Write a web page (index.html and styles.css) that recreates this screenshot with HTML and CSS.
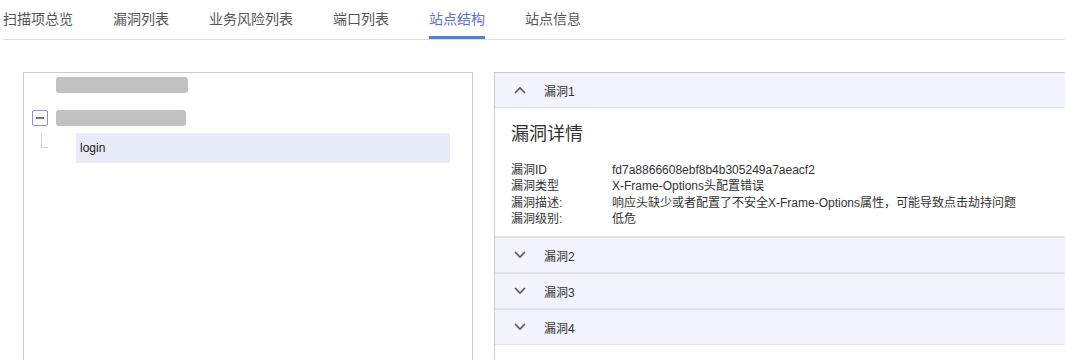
FILE: index.html
```html
<!DOCTYPE html>
<html lang="zh-CN">
  <head>
    <meta charset="UTF-8">
    <meta name="viewport" content="width=device-width, initial-scale=1.0">
    <title>站点结构</title>
    <link rel="stylesheet" href="styles.css">
  </head>
  <body>
    <ul class="tabs">
      <li>扫描项总览</li>
      <li>漏洞列表</li>
      <li>业务风险列表</li>
      <li>端口列表</li>
      <li class="active">站点结构</li>
      <li>站点信息</li>
    </ul>

    <div class="main">
      <div class="tree">
        <div class="tree-row first">
          <span class="masked" style="width: 132px"></span>
        </div>
        <div class="tree-row parent">
          <span class="toggle"></span>
          <span class="masked" style="width: 130px"></span>
        </div>
        <div class="tree-row child">
          <span class="guide"></span>
          <span class="node-label">login</span>
        </div>
      </div>

      <div class="vulns">
        <div class="item open">
          <div class="item-head">
            <svg width="12" height="8" viewBox="0 0 12 8"><polyline points="1,7 6,2 11,7" fill="none" stroke="#555" stroke-width="1.6"/></svg>
            <span>漏洞1</span>
          </div>
          <div class="item-body">
            <h3>漏洞详情</h3>
            <dl class="details">
              <dt>漏洞ID</dt><dd>fd7a8866608ebf8b4b305249a7aeacf2</dd>
              <dt>漏洞类型</dt><dd>X-Frame-Options头配置错误</dd>
              <dt>漏洞描述:</dt><dd>响应头缺少或者配置了不安全X-Frame-Options属性，可能导致点击劫持问题</dd>
              <dt>漏洞级别:</dt><dd>低危</dd>
            </dl>
          </div>
        </div>
        <div class="item">
          <div class="item-head">
            <svg width="12" height="8" viewBox="0 0 12 8"><polyline points="1,1 6,6 11,1" fill="none" stroke="#555" stroke-width="1.6"/></svg>
            <span>漏洞2</span>
          </div>
        </div>
        <div class="item">
          <div class="item-head">
            <svg width="12" height="8" viewBox="0 0 12 8"><polyline points="1,1 6,6 11,1" fill="none" stroke="#555" stroke-width="1.6"/></svg>
            <span>漏洞3</span>
          </div>
        </div>
        <div class="item">
          <div class="item-head">
            <svg width="12" height="8" viewBox="0 0 12 8"><polyline points="1,1 6,6 11,1" fill="none" stroke="#555" stroke-width="1.6"/></svg>
            <span>漏洞4</span>
          </div>
        </div>
      </div>
    </div>
  </body>
</html>
```

FILE: styles.css
```css
* {
  box-sizing: border-box;
  margin: 0;
  padding: 0;
}

html, body {
  height: 100%;
  overflow: hidden;
}

body {
  background: #fff;
  color: #333;
  font-family: "Liberation Sans", Arial, "Noto Sans CJK SC", sans-serif;
  font-size: 12px;
}

/* tabs */
.tabs {
  display: flex;
  gap: 40px;
  margin-left: 3px;
  border-bottom: 1px solid #dcdde3;
  list-style: none;
}

.tabs li {
  height: 39px;
  padding-top: 9px;
  font-size: 14px;
  line-height: 20px;
  color: #555;
  border-bottom: 3px solid transparent;
}

.tabs li.active {
  color: #5b6fd6;
  border-bottom-color: #5b7bdb;
}

/* layout */
.main {
  display: flex;
  gap: 21px;
  padding: 32px 0 0 23px;
}

.tree {
  width: 450px;
  height: 320px;
  border: 1px solid #cbcbcb;
  padding-left: 8px;
}

.vulns {
  flex: 1;
  height: 320px;
  border-top: 1px solid #cbcbcb;
  border-left: 1px solid #cbcbcb;
}

/* tree */
.tree-row {
  display: flex;
  align-items: center;
}

.tree-row.first {
  height: 24px;
  padding-left: 24px;
}

.tree-row.parent {
  height: 30px;
  margin-top: 6px;
  gap: 8px;
}

.tree-row.child {
  height: 30px;
  align-items: flex-start;
}

.masked {
  display: block;
  height: 16px;
  background: #c1c1c1;
  border-radius: 3px;
  filter: blur(0.5px);
}

.toggle {
  position: relative;
  width: 16px;
  height: 16px;
  border: 1px solid #8a8ee6;
  border-radius: 2px;
  background: #fff;
}

.toggle::after {
  content: "";
  position: absolute;
  left: 3px;
  top: 6px;
  width: 8px;
  height: 2px;
  background: #5b6fd6;
}

.guide {
  width: 7px;
  height: 14px;
  margin: 1px 0 0 9px;
  border-left: 1px solid #d6d6d6;
  border-bottom: 1px solid #d6d6d6;
}

.node-label {
  width: 374px;
  height: 30px;
  margin-left: 28px;
  padding-left: 4px;
  line-height: 30px;
  background: #e8ecf8;
  color: #222;
}

/* collapse items */
.item {
  border-bottom: 2px solid #e1e3e8;
}

.item:last-child {
  border-bottom-width: 1px;
}

.item-head {
  display: flex;
  align-items: center;
  gap: 18px;
  height: 34px;
  padding-left: 19px;
  background: #f1f4fc;
  color: #333;
}

.item.open .item-head {
  height: 35px;
  border-bottom: 1px solid #dcdfe6;
}

.item-body {
  padding: 14px 16px 9px;
}

.item-body h3 {
  font-size: 18px;
  font-weight: normal;
  line-height: 24px;
  color: #333;
  margin-bottom: 16px;
}

.details {
  display: grid;
  grid-template-columns: 101px 1fr;
  line-height: 16.3px;
}

.details dd {
  color: #333;
}
```
